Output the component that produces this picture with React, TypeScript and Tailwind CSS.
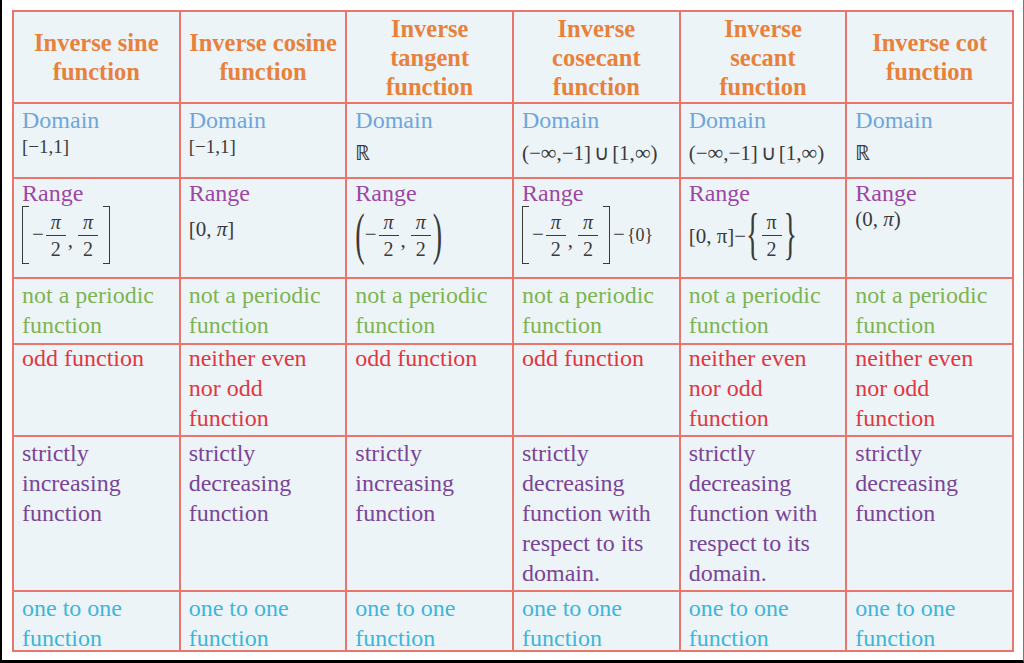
import React from "react";

const Frac = ({ n, d, upright }: { n: string; d: string; upright?: boolean }) => (
  <span className="inline-flex flex-col items-center leading-none text-[20px] mx-[2px]">
    <span className={upright ? "px-[4px] pb-[3px]" : "px-[4px] pb-[3px] italic"}>{n}</span>
    <span className="border-t-[1.5px] border-[#3a3a3a] px-[5px] pt-[3px]">{d}</span>
  </span>
);

const LB = () => (
  <span className="inline-block w-[7px] h-[58px] border-l-[1.5px] border-t-[1.5px] border-b-[1.5px] border-[#3a3a3a] mr-[3px]" />
);
const RB = () => (
  <span className="inline-block w-[7px] h-[58px] border-r-[1.5px] border-t-[1.5px] border-b-[1.5px] border-[#3a3a3a] ml-[3px]" />
);
const Tall = ({ c }: { c: string }) => (
  <span className="inline-flex h-[58px] items-center">
    <span className="inline-block text-[28px] leading-none scale-y-[2]">{c}</span>
  </span>
);

const Comma = () => <span className="self-center mt-[12px] mr-[3px]">,</span>;

const Cell = ({ children }: { children: React.ReactNode }) => (
  <div className="bg-[#edf4f8] pl-[8px] pr-[4px] pt-[1px]">{children}</div>
);

const Head = ({ lines }: { lines: string[] }) => (
  <div className="bg-[#edf4f8] flex flex-col items-center justify-center text-center [font-weight:700] text-[24.5px] leading-[29px] text-[#e7813b]">
    {lines.map((l, i) => (
      <span key={i}>{l}</span>
    ))}
  </div>
);

const Lines = ({ lines, color, up }: { lines: string[]; color: string; up?: boolean }) => (
  <Cell>
    <div className={up ? "-mt-[3px] text-[24px] leading-[30px] " + color : "text-[24px] leading-[30px] " + color}>
      {lines.map((l, i) => (
        <div key={i}>{l}</div>
      ))}
    </div>
  </Cell>
);

const DomainCell = ({ children, small }: { children: React.ReactNode; small?: boolean }) => (
  <Cell>
    <div className="text-[24px] leading-[30px] text-[#6fa6da]">Domain</div>
    <div
      className={
        small
          ? "text-[19px] leading-[22px] text-[#3a3a3a] mt-[1px]"
          : "text-[21px] leading-[24px] text-[#3a3a3a] mt-[6px]"
      }
    >
      {children}
    </div>
  </Cell>
);

const RangeCell = ({ children }: { children: React.ReactNode }) => (
  <Cell>
    <div className="text-[24px] leading-[26px] text-[#9c47a4]">Range</div>
    <div className="flex items-center text-[#3a3a3a] text-[21px]">{children}</div>
  </Cell>
);

const Inf = () => <span className="text-[22px]">{"\u221e"}</span>;

const InfDomain = () => (
  <span className="whitespace-nowrap">
    {"(\u2212"}
    <Inf />
    {",\u22121]"}
    <span className="mx-[3px]">{"\u222a"}</span>
    {"[1,"}
    <Inf />
    {")"}
  </span>
);

const PI = "\u03c0";
const MINUS = "\u2212";

export default function App() {
  return (
    <div className="[font-family:Liberation_Serif,Times_New_Roman,serif] w-[1024px] h-[663px] bg-white border-l-2 border-b-[3px] border-r border-l-black border-b-black border-r-[#777] pl-[10px] pt-[10px]">
      <div className="w-[1002px] grid grid-cols-6 grid-rows-[90px_73px_98px_64px_90px_153px_58px] gap-[2px] p-[2px] bg-[#e8766d]">
        <Head lines={["Inverse sine", "function"]} />
        <Head lines={["Inverse cosine", "function"]} />
        <Head lines={["Inverse", "tangent", "function"]} />
        <Head lines={["Inverse", "cosecant", "function"]} />
        <Head lines={["Inverse", "secant", "function"]} />
        <Head lines={["Inverse cot", "function"]} />

        <DomainCell small>{"[" + MINUS + "1,1]"}</DomainCell>
        <DomainCell small>{"[" + MINUS + "1,1]"}</DomainCell>
        <DomainCell>{"\u211d"}</DomainCell>
        <DomainCell>
          <InfDomain />
        </DomainCell>
        <DomainCell>
          <InfDomain />
        </DomainCell>
        <DomainCell>{"\u211d"}</DomainCell>

        <RangeCell>
          <LB />
          <span>{MINUS}</span>
          <Frac n={PI} d="2" />
          <Comma />
          <Frac n={PI} d="2" />
          <RB />
        </RangeCell>
        <RangeCell>
          <span className="mt-[8px]">
            {"[0, "}
            <i>{PI}</i>
            {"]"}
          </span>
        </RangeCell>
        <RangeCell>
          <Tall c="(" />
          <span>{MINUS}</span>
          <Frac n={PI} d="2" />
          <Comma />
          <Frac n={PI} d="2" />
          <Tall c=")" />
        </RangeCell>
        <RangeCell>
          <LB />
          <span>{MINUS}</span>
          <Frac n={PI} d="2" />
          <Comma />
          <Frac n={PI} d="2" />
          <RB />
          <span className="ml-[3px]">{MINUS}</span>
          <span className="text-[18px] ml-[2px]">{"{0}"}</span>
        </RangeCell>
        <RangeCell>
          <span className="whitespace-nowrap mt-[4px]">{"[0, " + PI + "]" + MINUS}</span>
          <Tall c="{" />
          <Frac n={PI} d="2" upright />
          <Tall c="}" />
        </RangeCell>
        <RangeCell>
          <span className="-mt-[2px]">
            {"(0, "}
            <i>{PI}</i>
            {")"}
          </span>
        </RangeCell>

        <Lines lines={["not a periodic", "function"]} color="text-[#7db452]" />
        <Lines lines={["not a periodic", "function"]} color="text-[#7db452]" />
        <Lines lines={["not a periodic", "function"]} color="text-[#7db452]" />
        <Lines lines={["not a periodic", "function"]} color="text-[#7db452]" />
        <Lines lines={["not a periodic", "function"]} color="text-[#7db452]" />
        <Lines lines={["not a periodic", "function"]} color="text-[#7db452]" />

        <Lines up lines={["odd function"]} color="text-[#e0383f]" />
        <Lines up lines={["neither even", "nor odd", "function"]} color="text-[#e0383f]" />
        <Lines up lines={["odd function"]} color="text-[#e0383f]" />
        <Lines up lines={["odd function"]} color="text-[#e0383f]" />
        <Lines up lines={["neither even", "nor odd", "function"]} color="text-[#e0383f]" />
        <Lines up lines={["neither even", "nor odd", "function"]} color="text-[#e0383f]" />

        <Lines lines={["strictly", "increasing", "function"]} color="text-[#7a4596]" />
        <Lines lines={["strictly", "decreasing", "function"]} color="text-[#7a4596]" />
        <Lines lines={["strictly", "increasing", "function"]} color="text-[#7a4596]" />
        <Lines
          lines={["strictly", "decreasing", "function with", "respect to its", "domain."]}
          color="text-[#7a4596]"
        />
        <Lines
          lines={["strictly", "decreasing", "function with", "respect to its", "domain."]}
          color="text-[#7a4596]"
        />
        <Lines lines={["strictly", "decreasing", "function"]} color="text-[#7a4596]" />

        <Lines lines={["one to one", "function"]} color="text-[#3db6d8]" />
        <Lines lines={["one to one", "function"]} color="text-[#3db6d8]" />
        <Lines lines={["one to one", "function"]} color="text-[#3db6d8]" />
        <Lines lines={["one to one", "function"]} color="text-[#3db6d8]" />
        <Lines lines={["one to one", "function"]} color="text-[#3db6d8]" />
        <Lines lines={["one to one", "function"]} color="text-[#3db6d8]" />
      </div>
    </div>
  );
}
